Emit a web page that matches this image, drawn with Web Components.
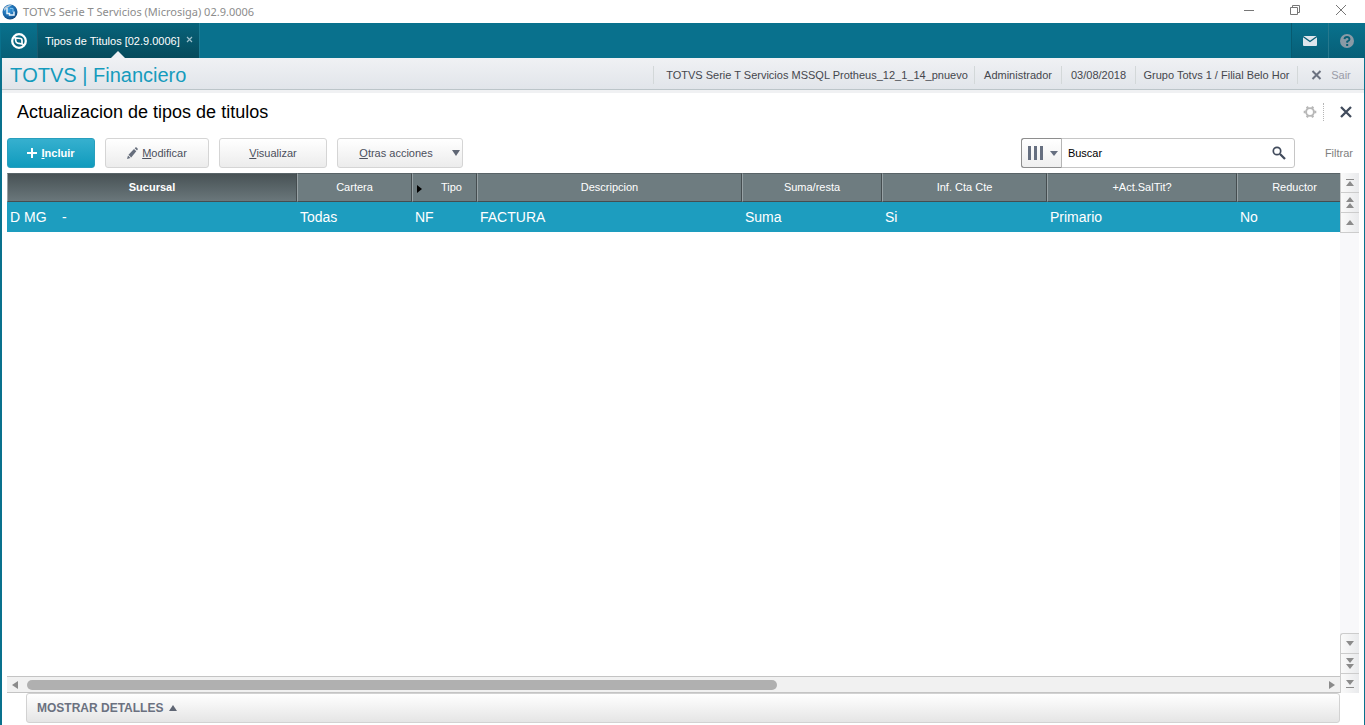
<!DOCTYPE html>
<html lang="es">
<head>
<meta charset="utf-8">
<title>TOTVS Serie T Servicios (Microsiga) 02.9.0006</title>
<style>
  html, body { margin: 0; height: 100%; }
  body { font: 11px/14px "Liberation Sans", Arial, sans-serif; color: #45474d; background: #fff; }
</style>
</head>
<body>
<erp-app></erp-app>
<script>
const base = `*{box-sizing:border-box} button,input,select{font:inherit;color:inherit;margin:0} button{padding:0;border:0;background:none;display:flex;align-items:center;justify-content:center} svg{display:block;flex:none}`;
function define(name, css, html) {
  const t = document.createElement('template');
  customElements.define(name, class extends HTMLElement {
    constructor() {
      super();
      t.innerHTML = `<style>${base}${css}</style>${html(this)}`;
      this.attachShadow({ mode: 'open' }).append(t.content.cloneNode(true));
    }
  });
}

define('window-bar', `
  :host{display:flex;align-items:center;height:23px;flex:none;background:#fff;color:#8c8c8c;font:11px/16px "Noto Sans","Open Sans",sans-serif;padding:0 1px 0 2px}
  .t{margin-left:5px;flex:1}
  button{width:46px;height:20px;margin-bottom:3px}`, () => `
  <svg width="16" height="16" viewBox="0 0 16 16"><defs><radialGradient id="g" cx=".4" cy=".35" r=".75"><stop offset="0" stop-color="#3fa0e4"/><stop offset=".6" stop-color="#1a67aa"/><stop offset="1" stop-color="#0e3d6c"/></radialGradient></defs><circle cx="8" cy="8" r="7.500" fill="url(#g)"/><path d="M2 4.500Q5 .5 10 1Q6 3 2 7z" fill="#b6c9da"/><path d="M5 4v5.500h2.500V11H12V7.500" fill="none" stroke="#eaf5fd" stroke-width="1.400"/><path d="M8 4.500h3V8" fill="none" stroke="#7cc0ee"/></svg>
  <span class="t">TOTVS Serie T Servicios (Microsiga) 02.9.0006</span>
  <button aria-label="Minimizar"><svg width="12" height="12"><path d="M1 6.500h10" stroke="#777"/></svg></button>
  <button aria-label="Restaurar"><svg width="12" height="12" fill="none" stroke="#777"><path d="M1.500 3.500h7v7h-7zM3.500 3.500v-2h7v7h-2"/></svg></button>
  <button aria-label="Cerrar"><svg width="12" height="12"><path d="M1 1l10 10M11 1L1 11" stroke="#777"/></svg></button>`);

define('nav-bar', `
  :host{display:flex;height:35px;flex:none;background:#09718d;color:#fff;padding-left:1px}
  button{width:37px;background:linear-gradient(#09718d,#075f77)}
  .home{border-right:1px solid #1a5b70}
  .tab{display:flex;align-items:center;position:relative;padding:0 6px 0 7px;background:linear-gradient(#07637b,#064a5b);border-right:1px solid #1b7c94}
  .tab a{color:#fff;text-decoration:none;white-space:nowrap}
  .tab button{width:7px;height:7px;background:none;margin:0 0 3px 6px}
  .tab::after{content:"";position:absolute;left:50%;bottom:0;margin-left:-7px;border:7px solid transparent;border-bottom-color:#eef0f3;border-top:0}
  .sp{flex:1}
  .mail,.help{border-left:1px solid #075a70}
  .help{border-color:#26788d}`, () => `
  <button class="home" aria-label="Inicio"><svg width="16" height="16" viewBox="0 0 16 16" fill="none"><circle cx="8" cy="8" r="6.800" stroke="#fff" stroke-width="2.300"/><path d="M2 4.500L9.500 5.500Q11 5.800 11 7.200V11L6.800 10.200Q5 9.800 4.800 8L4.400 5M11 11L13.500 12.500" stroke="#fff" stroke-width="1.700"/></svg></button>
  <div class="tab"><a href="#">Tipos de Titulos [02.9.0006]</a><button aria-label="Cerrar pestaña"><svg width="7" height="7"><path d="M1 1l5 5M6 1L1 6" stroke="#9cc0cb" stroke-width="1.200"/></svg></button></div>
  <div class="sp"></div>
  <button class="mail" aria-label="Mensajes"><svg width="16" height="12"><rect x="1" y="1" width="14" height="10" rx="1" fill="#dfe5ec"/><path d="M1 1.500l7 5 7-5" fill="none" stroke="#075e75" stroke-width="1.400"/></svg></button>
  <button class="help" aria-label="Ayuda"><svg width="16" height="16" fill="none"><circle cx="8" cy="8" r="7" fill="#8a9aa6"/><path d="M5.500 6.200Q5.700 4 8 4t2.500 2.200Q10.500 7.500 8.200 8.500V9.800" stroke="#075e75" stroke-width="1.900"/><rect x="7.200" y="11" width="2" height="2" fill="#075e75"/></svg></button>`);

define('context-bar', `
  :host{display:flex;align-items:center;height:35px;flex:none;background:linear-gradient(#f0f1f4,#e1e5ea 31px,#bcc5c9 31px,#bcc5c9 32px,#f0f1f3 32px);padding-bottom:1px}
  h1{flex:1;margin:0 0 0 8px;font:20px/24px "Liberation Sans",Arial,sans-serif;font-kerning:none;color:#159bbd;white-space:nowrap}
  span,button{display:flex;align-items:center;justify-content:center;height:18px;border-left:1px solid #d3d8d9;white-space:nowrap}
  .env{width:321px;padding-left:6px}
  .user{width:87px}
  .date{width:74px}
  .group{width:162px}
  button{width:67px;color:#9a9ca8;gap:9px}`, () => `
  <h1>TOTVS | Financiero</h1>
  <span class="env">TOTVS Serie T Servicios MSSQL Protheus_12_1_14_pnuevo</span><span class="user">Administrador</span><span class="date">03/08/2018</span><span class="group">Grupo Totvs 1 / Filial Belo Hor</span>
  <button><svg width="11" height="10"><path d="M1.500 1l8 8M9.500 1l-8 8" stroke="#6b7280" stroke-width="2"/></svg>Sair</button>`);

define('page-title', `
  :host{display:flex;align-items:center;height:38px;flex:none;padding:0 12px 0 15px}
  h2{flex:1;margin:0;font:18px/22px "Liberation Sans",Arial,sans-serif;color:#000}
  .gear{padding-right:6px;border-right:1px dotted #b5b5b5;height:18px;margin-right:16px}`, () => `
  <h2>Actualizacion de tipos de titulos</h2>
  <button class="gear" aria-label="Configurar"><svg width="14" height="14" viewBox="0 0 14 14" fill="none" stroke="#b7b7b7"><circle cx="7" cy="7" r="3.900" stroke-width="1.900"/><g stroke-width="2.300"><path d="M4.800 3.200L3.900 1.600M9.200 3.200l.9-1.600M11.400 7h1.900M9.200 10.800l.9 1.600M4.800 10.800l-.9 1.600M2.600 7H.7"/></g></svg></button>
  <button aria-label="Cerrar"><svg width="12" height="12"><path d="M1 1l10 10M11 1L1 11" stroke="#414b5c" stroke-width="2.300"/></svg></button>`);

define('tool-button', `
  :host{display:block;height:30px}
  button{width:100%;height:30px;gap:4px;border:1px solid #d5d5d5;border-radius:3px;background:linear-gradient(#fff,#ececec);color:#4b4f5c;position:relative}
  :host([primary]) button{background:linear-gradient(#36b0cf,#109bbd);border-color:#289fbd;color:#fff;font-weight:bold}
  :host([menu]) button{padding-right:8px}
  :host([menu]) button::after{content:"";position:absolute;right:2px;top:11px;border:4px solid transparent;border-top:6px solid #5f6674;border-bottom:0}`, () => `
  <button><slot name="icon"></slot><span><slot></slot></span></button>`);

define('search-box', `
  :host{display:flex;width:274px;height:30px;border:1px solid #c6c6c6;border-radius:3px;background:#fff}
  .cols{width:41px;margin:-1px 0 -1px -1px;border:1px solid #8e8e8e;border-right-color:#b5b5b5;border-radius:3px 0 0 3px;gap:7px;padding-left:4px;background:linear-gradient(#fff,#efefef)}
  input{flex:1;min-width:0;border:0;background:none;padding:0 6px;outline:0;color:#000}
  .go{width:30px}`, () => `
  <button class="cols" aria-label="Columnas"><svg width="15" height="14" fill="#666f80"><path d="M0 0h3v14H0zM6 0h3v14H6zM12 0h3v14h-3z"/></svg><svg width="8" height="5"><path d="M0 0h8L4 5z" fill="#666f80"/></svg></button>
  <input type="text" value="Buscar" aria-label="Buscar">
  <button class="go" aria-label="Ejecutar búsqueda"><svg width="14" height="14" fill="none" stroke="#414b5c"><circle cx="5" cy="5" r="3.700" stroke-width="1.700"/><path d="M8 8l5 5" stroke-width="2.300"/></svg></button>`);

define('action-bar', `
  :host{display:flex;align-items:center;height:42px;flex:none;padding:2px 11px 0 5px;gap:10px}
  .sp{flex:1}
  a{color:#808080;text-decoration:none;margin-left:20px}
  .w1{width:88px}.w2{width:104px}.w3{width:108px}.w4{width:126px}`, () => `
  <tool-button primary class="w1"><svg slot="icon" width="10" height="10"><path d="M5 0v10M0 5h10" stroke="#fff" stroke-width="2"/></svg><u>I</u>ncluir</tool-button>
  <tool-button class="w2"><svg slot="icon" width="11" height="12"><path d="M0 12l1-3.500 2.500 2.500zM1.500 7.800L7 2l2.300 2.300L4.200 10.500zM7.700 1.300L9 0l2 2-1 1.500z" fill="#666e7c"/></svg><u>M</u>odificar</tool-button>
  <tool-button class="w3"><u>V</u>isualizar</tool-button>
  <tool-button menu class="w4"><u>O</u>tras acciones</tool-button>
  <div class="sp"></div>
  <search-box></search-box><a href="#">Filtrar</a>`);

const glyphs = {
  first: 'M1 2h8v1H1zM5 4l4 5H1z', pageup: 'M5 0l4 5H1zM5 6l4 5H1z', up: 'M5 3l4 5H1z',
  down: 'M5 8l4-5H1z', pagedown: 'M5 5l4-5H1zM5 11l4-5H1z', last: 'M1 9h8v1H1zM5 7l4-5H1z'
};
define('row-scroller', `
  :host{display:flex;flex-direction:column;justify-content:space-between;width:19px;background:#f8f8fa}
  button{width:19px;height:20px;background:linear-gradient(90deg,#fafafa,#e9eaec);border:1px solid #ccc;border-width:0 0 1px 1px}
  div:first-child button{padding-top:2px}
  div:first-child button:first-child{height:21px}
  div:first-child button:last-child{border-bottom:0}
  div:last-child button{border-width:1px 0 0 1px}
  div:last-child button:first-child{border-radius:3px 0 0 0}`, () => {
  const b = (n, l) => `<button aria-label="${l}"><svg width="10" height="11"><path d="${glyphs[n]}" fill="#8b8b8b"/></svg></button>`;
  return `<div>${b('first', 'Primero')}${b('pageup', 'Página anterior')}${b('up', 'Anterior')}</div>
  <div>${b('down', 'Siguiente')}${b('pagedown', 'Página siguiente')}${b('last', 'Último')}</div>`;
});

define('column-scroller', `
  :host{display:flex;align-items:center;height:17px;flex:none;background:#f1f1f1;border:1px solid #c4c4c4;border-width:1px 0}
  button{width:16px;height:15px}
  .track{flex:1;margin:0 4px;height:10px}
  .thumb{width:58%;height:10px;border-radius:5px;background:#b0b0b0}`, () => `
  <button aria-label="Izquierda"><svg width="6" height="8"><path d="M6 0v8L0 4z" fill="#8b8b8b"/></svg></button>
  <div class="track"><div class="thumb"></div></div>
  <button aria-label="Derecha"><svg width="6" height="8"><path d="M0 0v8l6-4z" fill="#8b8b8b"/></svg></button>`);

const columns = [
  ['Sucursal', 'D MG    -', 290], ['Cartera', 'Todas', 115], ['Tipo', 'NF', 65], ['Descripcion', 'FACTURA', 265],
  ['Suma/resta', 'Suma', 140], ['Inf. Cta Cte', 'Si', 165], ['+Act.SalTit?', 'Primario', 190], ['Reductor', 'No', 115]
];
define('data-grid', `
  :host{display:flex;flex:1;min-height:0;padding:0 5px}
  .body{flex:1;min-width:0;display:flex;flex-direction:column}
  .view{flex:1;overflow:hidden}
  table{width:1345px;table-layout:fixed;border-collapse:separate;border-spacing:0}
  th{height:29px;padding:0 0 2px;background:#6e7c80;color:#fff;font-weight:normal;text-align:center;border:1px solid #454d50;border-left-color:#98a2a5;border-top-color:#596468}
  th:first-child{font-weight:bold;background:linear-gradient(#485255,#6a777b)}
  th:nth-child(3){padding-left:14px;position:relative}
  th:nth-child(3)::before{content:"";position:absolute;left:4px;top:11px;border:4px solid transparent;border-left:5px solid #000;border-right:0}
  td{height:30px;padding:0 3px;background:#1d9dbf;color:#fff;font-size:14px;white-space:pre}`, () => `
  <div class="body"><div class="view"><table>
  <colgroup>${columns.map(c => `<col style="width:${c[2]}px">`).join('')}</colgroup>
  <thead><tr>${columns.map(c => `<th scope="col">${c[0]}</th>`).join('')}</tr></thead>
  <tbody><tr>${columns.map(c => `<td>${c[1]}</td>`).join('')}</tr></tbody></table></div>
  <column-scroller></column-scroller></div>
  <row-scroller></row-scroller>`);

define('details-bar', `
  :host{display:block;flex:none;margin:0 24px 2px;height:30px}
  button{width:100%;height:30px;justify-content:flex-start;gap:6px;padding:0 10px;border:1px solid #d2d2d2;border-radius:3px;background:linear-gradient(#fff,#e5e5e5);color:#6b7180;font-size:12px;font-weight:bold}`, () => `
  <button>MOSTRAR DETALLES<svg width="8" height="6"><path d="M4 0l4 6H0z" fill="#5f6674"/></svg></button>`);

define('erp-app', `
  :host{display:flex;flex-direction:column;height:100vh;min-height:360px}
  main{flex:1;min-height:0;display:flex;flex-direction:column;border:solid #09718d;border-width:0 1px 0 2px}`, () => `
  <window-bar></window-bar><nav-bar></nav-bar>
  <main><context-bar></context-bar><page-title></page-title><action-bar></action-bar><data-grid></data-grid><details-bar></details-bar></main>`);
</script>
</body>
</html>
